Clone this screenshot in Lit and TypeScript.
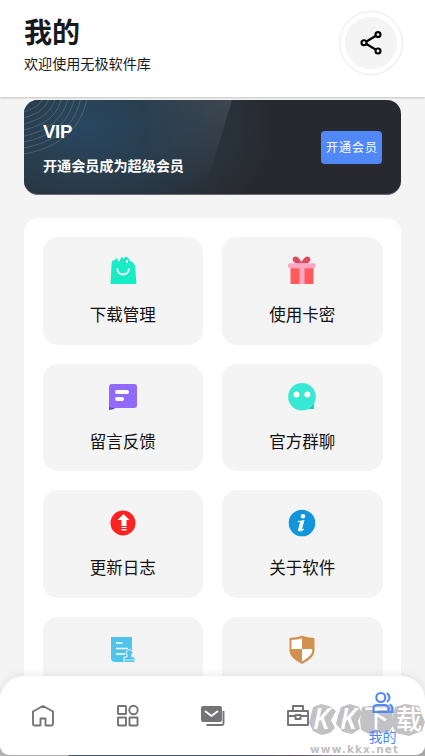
import { LitElement, html, svg, css } from "lit";
import { customElement } from "lit/decorators.js";

const tileIcons = [
  svg`<path fill="#18ecc6" d="M8 11.500l1.500-1.500 1.500.5 1-3 3 4.500 2.500-5 2.500 1.500 1.500-2 3 1.500 1 2.500 3.500 2 2 3 1.500 18.500H6.500L7.500 15z"/><path d="M13.200 18.500c.5 8 11.300 8 11.800 0" fill="none" stroke="#fff" stroke-width="2"/><path fill="#fff" d="M22 10h2v3h-2z"/>`,
  svg`<path d="M18 13.500C10 15 7 8 12 6.500c3-.5 5 3 6.500 5.500 1.500-2.500 3.500-6 6.500-5.500 5 1.500 2 8.500-5 7z" fill="#dd4a60"/><path fill="#ff5b5b" d="M7.500 17h23v17h-23z"/><rect x="5" y="13.200" width="27.500" height="5" rx="2" fill="#ffa5c6"/><path fill="#ffa5c6" d="M16.500 17h5v17h-5z"/>`,
  svg`<path fill="#6a3fc4" d="M5 28h8l-3 4-5 1z"/><rect x="5" y="7" width="28" height="24" rx="3" fill="#9169fd"/><path d="M13 15h10M13 22h5" stroke="#fff" stroke-width="4" stroke-linecap="round"/>`,
  svg`<path fill="#1bcbbb" d="M18 22h13v10H20z"/><circle cx="19" cy="19.700" r="13.800" fill="#37e8d2"/><circle cx="13.500" cy="17.500" r="3" fill="#fff"/><circle cx="24.300" cy="17.500" r="3" fill="#fff"/>`,
  svg`<circle cx="19" cy="20" r="12.500" fill="#ff2222"/><path fill="#fff" d="M19.500 11l6 6h-3v6h-5v-6h-4zM17.500 24h5v1h-5zM17.500 26h5v1.500h-5z"/>`,
  svg`<circle cx="19" cy="20" r="13.300" fill="#1296db"/><circle cx="20" cy="13.300" r="2.200" fill="#fff"/><path fill="#fff" d="M15 18l6.500-1-2.500 9.200 2-.7-.5 1.500c-2 1.500-5.500 2-5.500 0l2.200-8-2.400.3z"/>`,
  svg`<path fill="#4fc5ed" d="M7 7h21v25H11q-4 0-4-4z"/><path d="M12 13h6.500M12 18.500h12M12 24h9" stroke="#fff" stroke-width="1.600"/><path d="M20 32.500V27h3v-2a3.200 3.200 0 1 1 4.800 0v2H31v5.500z" fill="#4fc5ed" stroke="#f4f4f4"/><path d="M20 30h10" stroke="#e8f8fd" stroke-width=".8"/>`,
  svg`<path d="M6.500 8q7-.3 12.500-2.300 5.500 2 12.500 2.300v13.500q-1 7-12.500 12.500-11.500-5.500-12.500-12.500z" fill="#d19250"/><path fill="#fff" d="M19 8.200V19H8.500v-8.900q6-.3 10.500-1.900zM19 19h10.200v2.500q-1 5-10.200 9.900z"/>`,
];
const names = ["下载管理", "使用卡密", "留言反馈", "官方群聊", "更新日志", "关于软件", "", ""];

const navIcons = [
  svg`<path d="M7 21.500H3.500a1.500 1.500 0 0 1-1.500-1.500V7.500L12 2l10 5.500V20a1.500 1.500 0 0 1-1.500 1.500H17M9.500 22v-7.500h5V22M6.500 21.500h3M14.500 21.500h3"/>`,
  svg`<rect x="2" y="2" width="8" height="8" rx=".5"/><circle cx="17.500" cy="6" r="4.200"/><rect x="2" y="13.500" width="8" height="8" rx=".5"/><rect x="13.500" y="13.500" width="8" height="8" rx=".5"/>`,
  svg`<rect x="1" y="3" width="19" height="14" rx="1" fill="currentColor"/><path d="M5.500 21H21q1.500 0 1.500-1.500V7"/><path d="M4 7l6.500 5L17 7" stroke="#fff"/>`,
  svg`<path d="M2 7h20v14H2zM7 7V2h10v5M2 12h7M15 12h7M9.500 11h5v4h-5z"/>`,
];

@customElement("app-root")
export class AppRoot extends LitElement {
  static styles = css`
    :host { display: block; height: 756px; overflow: hidden; position: relative; background: #f4f4f4;
      font-family: Roboto, "Noto Sans CJK SC", sans-serif; color: #18191d; }
    * { box-sizing: border-box; }
    svg { display: block; }
    header { height: 97px; background: #fff; padding: 12px 23.300px 0 24px; display: flex; justify-content: space-between;
      box-shadow: 0 1px 2px rgba(0,0,0,.2); position: relative; }
    h1 { margin: 2px 0 0; font-size: 28px; line-height: 40px; font-weight: 700; }
    .sub { font-size: 14.100px; line-height: 22px; margin-top: -1px; }
    .share { width: 62px; height: 62px; border-radius: 50%; border: 5px solid #fff; background: #f4f4f4;
      box-shadow: 0 0 2px rgba(0,0,0,.24); display: grid; place-items: center; color: #000; }
    .banner { margin: 3px 24px 0; height: 94.500px; border-radius: 14px; position: relative; overflow: hidden; color: #fff;
      display: flex; align-items: center; justify-content: space-between; padding: 0 19px; border-bottom: 1px solid #686972;
      background: radial-gradient(ellipse 190px 125px at 63px 25px, #294760 0%, #293c4b 45%, rgba(40,45,53,0) 100%), #28292e; }
    .art { position: absolute; left: 0; top: 0; }
    .copy { position: relative; height: 94px; }
    .vip { font-family: "Liberation Sans", Roboto, sans-serif; font-size: 18.500px; line-height: 24px; font-weight: 700; margin-top: 20px; letter-spacing: -.3px; }
    .tag { font-size: 14.100px; line-height: 20px; font-weight: 700; margin-top: 12px; }
    .join { position: relative; top: 1px; width: 61px; height: 33px; border-radius: 4px; background: #5088f7; font-size: 12px;
      letter-spacing: 1px; display: grid; place-items: center; padding: 0 0 2px 1px; white-space: nowrap; }
    .panel { margin: 23.500px 24px 0; height: 560px; background: #fff; border-radius: 15px; padding: 19px 18.500px;
      display: grid; grid-template-columns: 1fr 1fr; grid-auto-rows: 107.500px; gap: 19px; }
    .tile { background: #f4f4f4; border-radius: 15px; display: flex; flex-direction: column; align-items: center; padding-top: 13px; }
    .name { font-size: 16.500px; line-height: 24px; margin-top: 16px; color: #111; }
    nav { position: absolute; left: 0; right: 0; bottom: 1px; height: 79px; background: #fff; border-radius: 24px 24px 9px 9px;
      box-shadow: 0 -1px 10px rgba(0,0,0,.09); display: grid; grid-template-columns: repeat(5, 1fr); color: #747476; }
    .item { display: grid; place-items: center; position: relative; z-index: 2; }
    .me { display: flex; flex-direction: column; align-items: center; padding-top: 14px; color: #4f87f7; font-size: 14px;
      position: relative; z-index: 2; }
    .me span { line-height: 16px; margin-top: 13.500px; }
    .foot { position: absolute; left: 0; right: 0; bottom: 0; height: 10px;
      background: linear-gradient(90deg, #b5b5b5 0 68px, #465870 69px 260px, #70556b 300px, #aaa 355px); }
    .mark { position: absolute; right: 0; bottom: -1px; z-index: 1; pointer-events: none; overflow: visible; }
    .glyphs { font-family: "Noto Sans CJK SC", sans-serif; font-weight: 500; fill: #fff; }
    .latin { font-family: "Open Sans", sans-serif; font-size: 28px; font-style: italic; font-weight: 600; }
    .url { font-family: "DejaVu Sans", sans-serif; font-size: 10.500px; font-weight: 700; fill: #bfbfc1; }
  `;

  render() {
    return html`
      <header>
        <div><h1>我的</h1><div class="sub">欢迎使用无极软件库</div></div>
        <div class="share"><svg width="26" height="26" viewBox="0 0 26 26" fill="none" stroke="currentColor" stroke-width="2.100">
          <path d="M8.500 11.500L17.500 6M8.500 14L17.500 19.500"/><circle cx="6" cy="12.800" r="2.500"/><circle cx="20" cy="4.600" r="2.500"/><circle cx="20" cy="21" r="2.500"/></svg></div>
      </header>
      <section class="banner">
        <svg class="art" width="377" height="94" viewBox="0 0 377 94">
          <defs>
            <linearGradient id="beam" x1="0" x2="1"><stop offset="0" stop-color="#fff" stop-opacity="0"/><stop offset="1" stop-color="#fff" stop-opacity=".11"/></linearGradient>
            <linearGradient id="down" x1="0" x2="0" y1="0" y2="1"><stop offset="0" stop-color="#fff"/><stop offset="1" stop-color="#fff" stop-opacity="0"/></linearGradient>
            <mask id="fade"><rect width="377" height="94" fill="url(#down)"/></mask>
          </defs>
          <path d="M115 0H208L180 94H115z" fill="url(#beam)" mask="url(#fade)"/>
          <g fill="none" stroke="#708b84" stroke-opacity=".6" stroke-width=".8">
            ${[0, 1, 2, 3, 4, 5, 6, 7].map((i) => svg`<path d=${`M0 ${12 + i * 6}C${8 + i * 3.2} ${9 + i * 5.6} ${15 + i * 5.7} ${6 + i * 4} ${18 + i * 6.4} 0`}/>`)}
          </g>
        </svg>
        <div class="copy"><div class="vip">VIP</div><div class="tag">开通会员成为超级会员</div></div>
        <div class="join">开通会员</div>
      </section>
      <main class="panel">
        ${names.map((n, i) => html`<div class="tile"><svg width="38" height="38" viewBox="0 0 38 38">${tileIcons[i]}</svg><div class="name">${n}</div></div>`)}
      </main>
      <div class="foot"></div>
      <nav>
        ${navIcons.map((ic) => html`<div class="item"><svg width="24" height="24" viewBox="0 0 24 24" fill="none" stroke="currentColor" stroke-width="1.900" stroke-linejoin="round">${ic}</svg></div>`)}
        <div class="me">
          <svg width="24" height="25" viewBox="0 0 24 25" fill="none" stroke="currentColor" stroke-width="2.100"><circle cx="9.800" cy="7.500" r="4.500"/><path d="M2.500 22v-3.500q0-3.500 4-3.500h7q4 0 4 3.500V22zM16 3q5 4.500 0 9M18.500 14.500q3 1.500 3 4V22H19"/></svg>
          <span>我的</span>
        </div>
        <svg class="mark" width="120" height="57" viewBox="0 0 120 57">
          <g fill="#c2c2c4"><path d="M8 8l8-3 8 2 7 5-5 9 4 8-5 5-9 2-8-4-4-8 2-8z"/><path d="M36 8l9-3 9 3 3 6-4 8 2 8-8 5-9-2-7-8 2-8z"/><path d="M57 8l15-2 16 2-1 20-4 7-9-2-8 3-10-5-1-10z"/><path d="M90 8l10-3 14 2 3 9 3 7-3 9-13 5-13-3-5-9z"/></g>
          <g class="glyphs"><text class="latin" x="8" y="30">K</text><text class="latin" x="35" y="30">K</text><text x="59" y="28" font-size="25">下</text><text x="91" y="30" font-size="26">载</text></g>
          <text class="url" x="5" y="53.500" textLength="88">www.kkx.net</text>
        </svg>
      </nav>`;
  }
}
